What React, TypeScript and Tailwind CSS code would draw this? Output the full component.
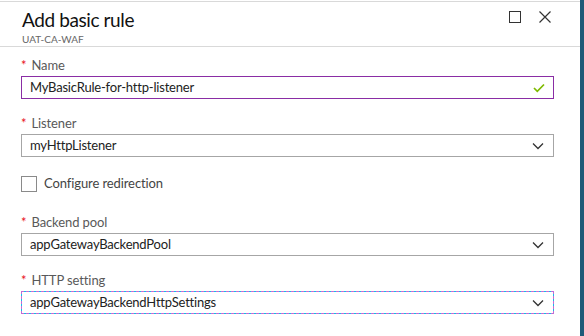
import React from "react";

const font = { fontFamily: 'Lato, "Open Sans", "Noto Sans", sans-serif' };

function Chevron() {
  return (
    <svg width="12" height="8" viewBox="0 0 12 8" className="shrink-0">
      <path d="M1 1.5 L6 6.5 L11 1.5" fill="none" stroke="#333" strokeWidth="1.3" />
    </svg>
  );
}

function Label({ text }: { text: string }) {
  return (
    <div className="h-[18px] flex items-center text-[13px] text-[#595959] leading-none tracking-[-0.1px]">
      <span className="text-[#e81123] mr-[5px] text-[13px]">*</span>
      {text}
    </div>
  );
}

function Select({ value, focused }: { value: string; focused?: boolean }) {
  return (
    <div
      className={
        focused
          ? "h-[23px] border border-[#14c0ea] outline outline-1 outline-dashed outline-[#c46ad6] -outline-offset-1 flex items-center justify-between pl-[8px] pr-[9px] text-[13px] tracking-[-0.2px] text-[#222]"
          : "h-[23px] border border-[#a6a6a6] flex items-center justify-between pl-[8px] pr-[9px] text-[13px] tracking-[-0.2px] text-[#222]"
      }
    >
      <span>{value}</span>
      <Chevron />
    </div>
  );
}

export default function App() {
  return (
    <div className="w-[584px] h-[336px] bg-white flex overflow-hidden" style={font}>
      <div className="w-[580px] flex flex-col">
        <div className="h-[1px] bg-white" />
        <div className="h-[46px] border-t border-b border-[#d9d9d9] flex justify-between items-start px-[22px]">
          <div className="pt-[7px]">
            <div className="text-[19px] leading-[22px] tracking-[-0.4px] text-[#111]">Add basic rule</div>
            <div className="text-[10px] leading-[12px] text-[#666] mt-[2px]">UAT-CA-WAF</div>
          </div>
          <div className="flex items-center gap-[18px] pt-[9px] pr-[7px]">
            <div className="w-[12px] h-[12px] border-[1.5px] border-[#333]" />
            <svg width="12" height="12" viewBox="0 0 12 12">
              <path d="M0.5 0.5 L11.5 11.5 M11.5 0.5 L0.5 11.5" stroke="#333" strokeWidth="1.2" />
            </svg>
          </div>
        </div>
        <div className="pl-[21px] pr-[26px] pt-[9px] flex flex-col">
          <Label text="Name" />
          <div className="mt-[2px] h-[23px] border border-[#8a2da5] flex items-center justify-between pl-[8px] pr-[8px] text-[13px] tracking-[-0.2px] text-[#222]">
            <span>MyBasicRule-for-http-listener</span>
            <svg width="12" height="10" viewBox="0 0 12 10">
              <path d="M1 5 L4.3 8.3 L11 1.5" fill="none" stroke="#7fba00" strokeWidth="1.7" />
            </svg>
          </div>
          <div className="mt-[15px]">
            <Label text="Listener" />
          </div>
          <div className="mt-[2px]">
            <Select value="myHttpListener" />
          </div>
          <div className="mt-[19px] flex items-center h-[16px]">
            <div className="w-[16px] h-[16px] border border-[#8a8a8a]" />
            <span className="ml-[7px] text-[13px] tracking-[-0.1px] text-[#444]">Configure redirection</span>
          </div>
          <div className="mt-[21px]">
            <Label text="Backend pool" />
          </div>
          <div className="mt-[2px]">
            <Select value="appGatewayBackendPool" />
          </div>
          <div className="mt-[15px]">
            <Label text="HTTP setting" />
          </div>
          <div className="mt-[2px]">
            <Select value="appGatewayBackendHttpSettings" focused />
          </div>
        </div>
      </div>
      <div className="w-[4px] bg-[#1f5a78]" />
    </div>
  );
}
